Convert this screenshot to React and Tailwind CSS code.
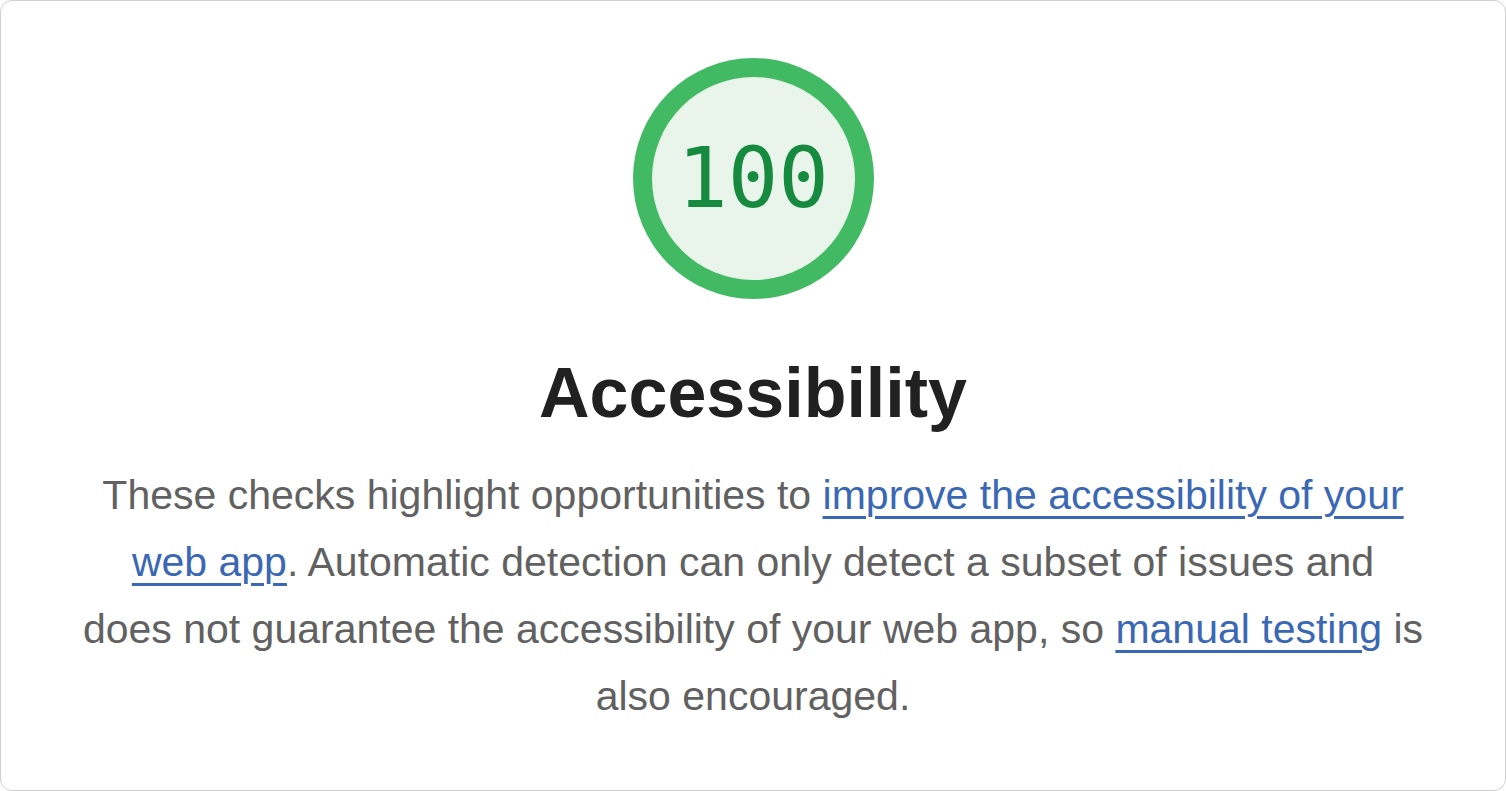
const ScoreGauge = ({ score }) => {
  return (
    <div className="w-[241px] h-[241px] rounded-full bg-[#42b963] p-[19px]">
      <div className="w-full h-full rounded-full bg-[#e9f5ea] flex items-center justify-center">
        <span className="text-[84px] leading-none text-[#168b40] font-['DejaVu_Sans_Mono',monospace] pb-[2px]">
          {score}
        </span>
      </div>
    </div>
  );
};

const linkClass =
  'text-[#3a68b4] underline decoration-[3px] underline-offset-[7px]';

const App = () => {
  return (
    <div className="w-[1506px] h-[791px] bg-white font-['Liberation_Sans',Arial,sans-serif]">
      <div className="h-full border border-[#cfcfcf] rounded-[12px] flex flex-col items-center pt-[57px]">
        {/* Score */}
        <ScoreGauge score="100" />

        {/* Title */}
        <h1 className="mt-[52px] text-[70px] leading-[84px] font-bold text-[#212121]">
          Accessibility
        </h1>

        {/* Description */}
        <p className="mt-[27px] w-[1380px] text-center text-[41px] leading-[67px] text-[#616161]">
          These checks highlight opportunities to{' '}
          <a href="#" className={linkClass}>
            improve the accessibility of your
            <br />
            web app
          </a>
          . Automatic detection can only detect a subset of issues and
          <br />
          does not guarantee the accessibility of your web app, so{' '}
          <a href="#" className={linkClass}>
            manual testing
          </a>{' '}
          is
          <br />
          also encouraged.
        </p>
      </div>
    </div>
  );
};

export default App;
